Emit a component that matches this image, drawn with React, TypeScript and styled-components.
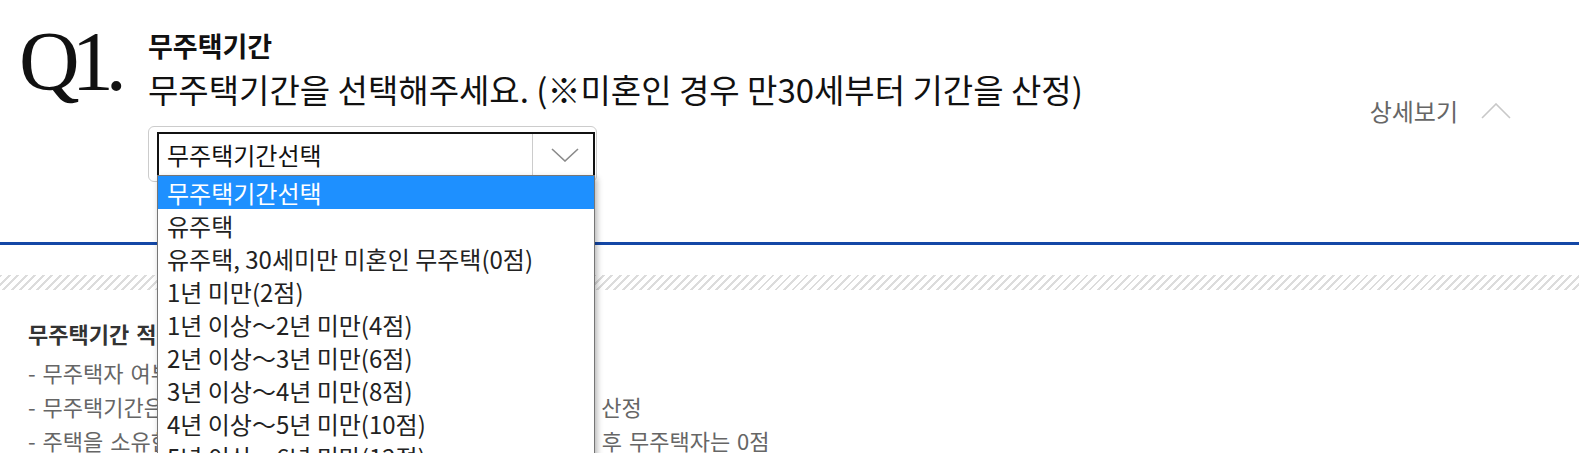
import React from 'react';
import styled, { createGlobalStyle } from 'styled-components';

const GlobalStyle = createGlobalStyle`
  html, body {
    margin: 0;
    padding: 0;
    background: #fff;
    overflow: hidden;
  }
  body {
    font-family: "Noto Sans CJK KR", "Noto Sans", sans-serif;
    color: #111;
  }
`;

const Page = styled.div`
  width: 1579px;
  height: 453px;
  overflow: hidden;
`;

const Header = styled.header`
  display: flex;
  align-items: flex-start;
  box-sizing: border-box;
  height: 245px;
  padding: 0 68px 0 19px;
  border-bottom: 3px solid #1447a6;
`;

const QMark = styled.div`
  flex-shrink: 0;
  width: 129px;
  margin-top: 20px;
  font-family: "Liberation Serif", serif;
  font-size: 84px;
  line-height: 84px;
  letter-spacing: -8px;
  color: #111;
`;

const Question = styled.div`
  display: flex;
  flex-direction: column;
  padding-top: 30px;
`;

const Title = styled.div`
  font-size: 27px;
  line-height: 32px;
  font-weight: 700;
  color: #111;
`;

const Subtitle = styled.div`
  margin-top: 8px;
  font-size: 33px;
  line-height: 38px;
  color: #111;
`;

const SelectFrame = styled.div`
  margin-top: 18px;
  box-sizing: border-box;
  width: 449px;
  height: 56px;
  border: 1px solid #ccc;
  border-radius: 6px;
  padding: 5px 1px 0 8px;
`;

const SelectBox = styled.div`
  position: relative;
  display: flex;
  box-sizing: border-box;
  height: 45px;
  border: 2px solid #111;
  border-bottom-color: #888;
  background: #fff;
`;

const SelectValue = styled.div`
  flex: 1;
  padding-left: 8px;
  font-size: 24px;
  line-height: 41px;
  color: #111;
`;

const ArrowZone = styled.div`
  display: flex;
  align-items: center;
  justify-content: center;
  box-sizing: border-box;
  width: 61px;
  padding-left: 4px;
  border-left: 1px solid #ccc;
`;

const OptionList = styled.ul`
  position: absolute;
  top: 100%;
  left: -2px;
  right: -2px;
  margin: 0;
  padding: 0;
  list-style: none;
  background: #fff;
  border: 1px solid #767676;
  box-shadow: 2px 3px 6px rgba(0, 0, 0, 0.3);
  z-index: 10;
`;

const OptionItem = styled.li<{ $active?: boolean }>`
  height: 33px;
  padding-left: 9px;
  font-size: 24px;
  line-height: 33px;
  white-space: nowrap;
  color: ${(p) => (p.$active ? '#fff' : '#222')};
  background: ${(p) => (p.$active ? '#1e90ff' : '#fff')};
`;

const DetailToggle = styled.div`
  display: flex;
  align-items: center;
  gap: 23px;
  margin-left: auto;
  margin-top: 96px;
  font-size: 24px;
  line-height: 30px;
  color: #666;
`;

const Hatch = styled.div`
  margin-top: 30px;
  height: 15px;
  background: repeating-linear-gradient(135deg, #dcdcdc 0 2px, #fff 2px 6px);
`;

const Notes = styled.div`
  padding: 26px 0 0 28px;
`;

const NoteTitle = styled.div`
  margin-bottom: 5px;
  font-size: 22px;
  line-height: 34px;
  font-weight: 700;
  word-spacing: 2px;
  color: #333;
`;

const NoteLine = styled.div`
  font-size: 22px;
  line-height: 34px;
  word-spacing: 2px;
  color: #666;
  white-space: nowrap;
`;

const options = [
  '무주택기간선택',
  '유주택',
  '유주택, 30세미만 미혼인 무주택(0점)',
  '1년 미만(2점)',
  '1년 이상～2년 미만(4점)',
  '2년 이상～3년 미만(6점)',
  '3년 이상～4년 미만(8점)',
  '4년 이상～5년 미만(10점)',
  '5년 이상～6년 미만(12점)',
  '6년 이상～7년 미만(14점)',
];

const notes = [
  '- 무주택자 여부는 세대구성원 전원을 기준으로 판단',
  '- 무주택기간은 30세 이후 기간으로 혼인한 경우 혼인신고일로 산정',
  '- 주택을 소유한 적이 없는 만30세 미만 미혼자 및 주택을 처분 후 무주택자는 0점',
];

function ChevronDown() {
  return (
    <svg width="28" height="14" viewBox="0 0 28 14">
      <polyline points="1,1 14,13 27,1" fill="none" stroke="#8a8a8a" strokeWidth="1.6" />
    </svg>
  );
}

function ChevronUp() {
  return (
    <svg width="30" height="16" viewBox="0 0 30 16">
      <polyline points="1,15 15,1 29,15" fill="none" stroke="#c8c8c8" strokeWidth="1.6" />
    </svg>
  );
}

function PeriodSelect() {
  return (
    <SelectFrame>
      <SelectBox>
        <SelectValue>무주택기간선택</SelectValue>
        <ArrowZone>
          <ChevronDown />
        </ArrowZone>
        <OptionList>
          {options.map((o, i) => (
            <OptionItem key={i} $active={i === 0}>
              {o}
            </OptionItem>
          ))}
        </OptionList>
      </SelectBox>
    </SelectFrame>
  );
}

export default function App() {
  return (
    <Page>
      <GlobalStyle />
      <Header>
        <QMark>Q1.</QMark>
        <Question>
          <Title>무주택기간</Title>
          <Subtitle>무주택기간을 선택해주세요. (※미혼인 경우 만30세부터 기간을 산정)</Subtitle>
          <PeriodSelect />
        </Question>
        <DetailToggle>
          상세보기
          <ChevronUp />
        </DetailToggle>
      </Header>
      <Hatch />
      <Notes>
        <NoteTitle>무주택기간 적용기준</NoteTitle>
        {notes.map((n, i) => (
          <NoteLine key={i}>{n}</NoteLine>
        ))}
      </Notes>
    </Page>
  );
}
